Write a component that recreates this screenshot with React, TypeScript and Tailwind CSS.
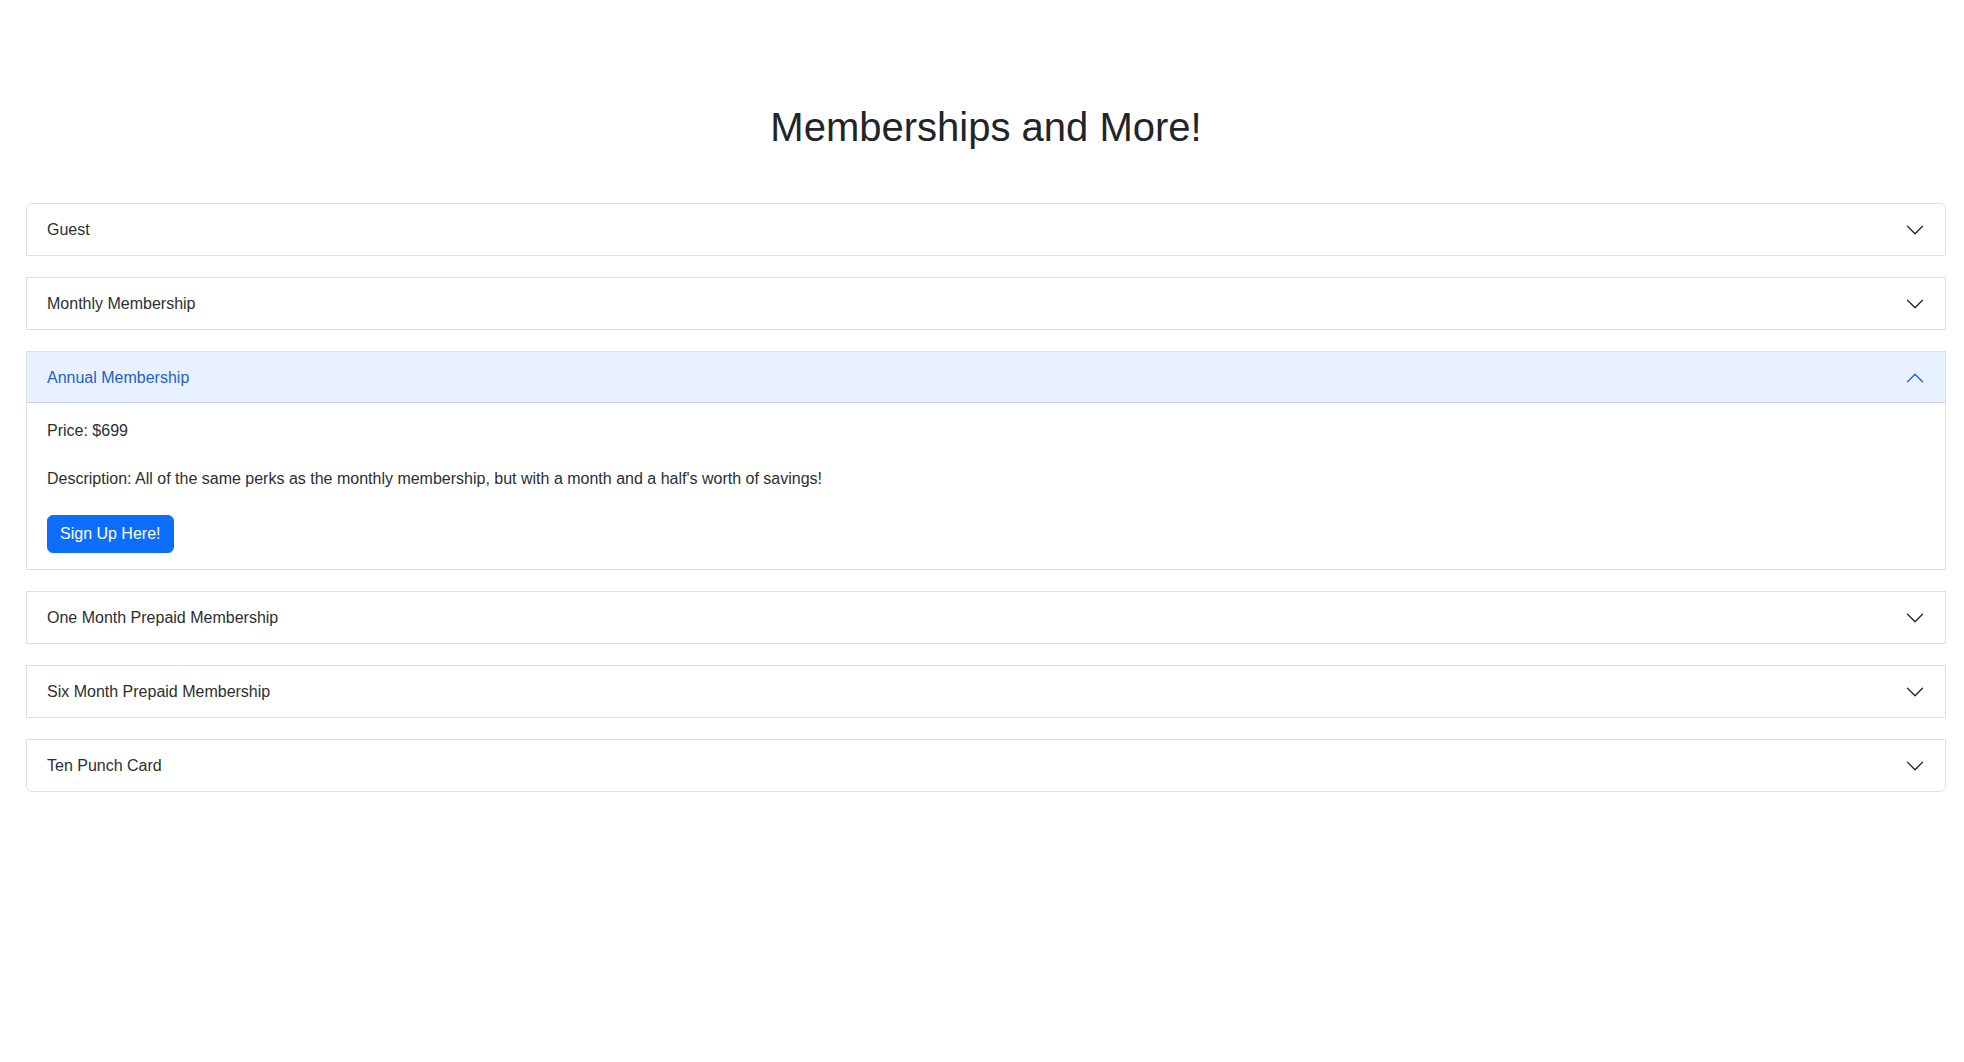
import { useState } from 'react'

type Plan = {
  name: string
  price: string
  description: string
}

const PLANS: Plan[] = [
  { name: 'Guest', price: '$25', description: 'Drop in for a single day of climbing.' },
  { name: 'Monthly Membership', price: '$65', description: 'Unlimited access to the gym, billed every month.' },
  {
    name: 'Annual Membership',
    price: '$699',
    description: "All of the same perks as the monthly membership, but with a month and a half's worth of savings!",
  },
  { name: 'One Month Prepaid Membership', price: '$75', description: 'One month of unlimited access, paid up front.' },
  { name: 'Six Month Prepaid Membership', price: '$375', description: 'Six months of unlimited access, paid up front.' },
  { name: 'Ten Punch Card', price: '$180', description: 'Ten visits to use whenever you like.' },
]

function Chevron({ open }: { open: boolean }) {
  return (
    <svg
      viewBox="0 0 16 16"
      className={open ? 'w-5 h-5 shrink-0 ml-auto rotate-180 text-[#1f5fc9]' : 'w-5 h-5 shrink-0 ml-auto text-[#212529]'}
      fill="currentColor"
    >
      <path
        fillRule="evenodd"
        d="M1.646 4.646a.5.5 0 0 1 .708 0L8 10.293l5.646-5.647a.5.5 0 0 1 .708.708l-6 6a.5.5 0 0 1-.708 0l-6-6a.5.5 0 0 1 0-.708z"
      />
    </svg>
  )
}

export default function App() {
  const [openName, setOpenName] = useState<string | null>('Annual Membership')

  return (
    <div className="min-h-screen bg-white text-[#212529] font-['Liberation_Sans',Arial,sans-serif] pt-[103px] pl-[26px] pr-[18px]">
      <h1 className="text-[40px] leading-[48px] text-center font-normal mb-[52px]">Memberships and More!</h1>

      <div className="flex flex-col gap-[21px]">
        {PLANS.map((plan, i) => {
          const open = openName === plan.name
          const first = i === 0
          const last = i === PLANS.length - 1
          return (
            <div
              key={plan.name}
              className={
                'border border-[#dfdfdf] bg-white overflow-hidden ' +
                (first ? 'rounded-t-[6px] ' : '') +
                (last ? 'rounded-b-[6px]' : '')
              }
            >
              {/* Header */}
              <button
                type="button"
                onClick={() => setOpenName(open ? null : plan.name)}
                className={
                  open
                    ? 'flex items-center w-full h-[51px] px-[20px] text-[16px] leading-6 text-left bg-[#e7f1ff] text-[#1f5fc9] shadow-[inset_0_-1px_0_rgba(0,0,0,0.125)]'
                    : 'flex items-center w-full h-[51px] px-[20px] text-[16px] leading-6 text-left bg-white text-[#2b2f33]'
                }
              >
                {plan.name}
                <Chevron open={open} />
              </button>

              {/* Body */}
              {open && (
                <div className="px-[20px] py-[16px] text-[16px] leading-6 text-[#2b2f33]">
                  <p className="mb-[24px]">Price: {plan.price}</p>
                  <p className="mb-[24px]">Description: {plan.description}</p>
                  <button
                    type="button"
                    className="px-[12px] py-[6px] border border-[#0d6efd] bg-[#0d6efd] text-white rounded-[6px] text-[16px] leading-6"
                  >
                    Sign Up Here!
                  </button>
                </div>
              )}
            </div>
          )
        })}
      </div>
    </div>
  )
}
